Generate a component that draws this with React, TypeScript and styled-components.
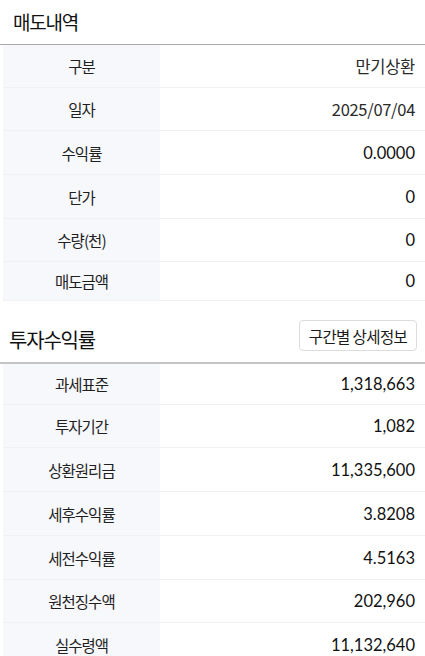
import React from "react";
import styled, { createGlobalStyle } from "styled-components";

const Global = createGlobalStyle`
  html, body { margin: 0; padding: 0; background: #ffffff; }
  body { font-family: Lato, "Noto Sans CJK KR", sans-serif; color: #222; }
  * { box-sizing: border-box; }
`;

const Page = styled.div`
  width: 425px;
  display: flex;
  flex-direction: column;
`;

const SectionHeader = styled.div<{ $height: number; $line: number; $lineColor: string }>`
  height: ${(p) => p.$height}px;
  display: flex;
  align-items: flex-end;
  justify-content: space-between;
  border-bottom: ${(p) => p.$line}px solid ${(p) => p.$lineColor};
  padding-right: 8px;
`;

const Title = styled.h2<{ $left: number; $size: number; $bottom: number }>`
  margin: 0;
  padding-left: ${(p) => p.$left}px;
  padding-bottom: ${(p) => p.$bottom}px;
  font-family: "Noto Sans CJK KR", sans-serif;
  font-size: ${(p) => p.$size}px;
  font-weight: 400;
  letter-spacing: -1.2px;
  line-height: 26px;
  color: #111;
`;

const DetailButton = styled.button`
  margin-bottom: 11px;
  height: 31px;
  width: 118px;
  padding: 0;
  background: #fff;
  border: 1px solid #dcdcdc;
  border-radius: 4px;
  font-family: "Noto Sans CJK KR", sans-serif;
  font-size: 15.5px;
  letter-spacing: -0.6px;
  color: #1a1a1a;
`;

const Table = styled.div`
  margin-left: 3px;
  display: flex;
  flex-direction: column;
`;

const Row = styled.div<{ $h: number }>`
  height: ${(p) => p.$h}px;
  display: grid;
  grid-template-columns: 157px 1fr;
  border-bottom: 1px solid #f1f1f3;
`;

const Label = styled.div`
  background: #f7f8fc;
  display: flex;
  align-items: center;
  justify-content: center;
  font-family: "Noto Sans CJK KR", sans-serif;
  font-size: 15.5px;
  letter-spacing: -1px;
  color: #1f1f1f;
`;

const Value = styled.div<{ $plain?: boolean }>`
  display: flex;
  align-items: center;
  justify-content: flex-end;
  padding-right: 10px;
  font-family: ${(p) => (p.$plain ? `"Noto Sans CJK KR", sans-serif` : `Lato, "Noto Sans CJK KR", sans-serif`)};
  font-size: 16.5px;
  letter-spacing: ${(p) => (p.$plain ? "-0.3px" : "0")};
  font-weight: 400;
  color: ${(p) => (p.$plain ? "#2a2a2a" : "#111")};
`;

type Item = { label: string; value: string; plain?: boolean; h?: number };

const sale: Item[] = [
  { label: "구분", value: "만기상환", plain: true, h: 43 },
  { label: "일자", value: "2025/07/04", plain: true, h: 43 },
  { label: "수익률", value: "0.0000", h: 44 },
  { label: "단가", value: "0", h: 44 },
  { label: "수량(천)", value: "0", h: 43 },
  { label: "매도금액", value: "0", h: 39 },
];

const yieldRows: Item[] = [
  { label: "과세표준", value: "1,318,663", h: 41 },
  { label: "투자기간", value: "1,082", h: 43 },
  { label: "상환원리금", value: "11,335,600", h: 44 },
  { label: "세후수익률", value: "3.8208", h: 44 },
  { label: "세전수익률", value: "4.5163", h: 44 },
  { label: "원천징수액", value: "202,960", h: 43 },
  { label: "실수령액", value: "11,132,640", h: 44 },
];

const DataTable = ({ items }: { items: Item[] }) => (
  <Table>
    {items.map((it) => (
      <Row key={it.label} $h={it.h ?? 44}>
        <Label>{it.label}</Label>
        <Value $plain={it.plain}>{it.value}</Value>
      </Row>
    ))}
  </Table>
);

export default function App() {
  return (
    <>
      <Global />
      <Page>
        <SectionHeader $height={45} $line={1} $lineColor="#a8a8a8">
          <Title $left={13} $size={19} $bottom={9}>매도내역</Title>
        </SectionHeader>
        <DataTable items={sale} />
        <SectionHeader $height={63} $line={2} $lineColor="#c4c4c4">
          <Title $left={9} $size={20} $bottom={9}>투자수익률</Title>
          <DetailButton>구간별 상세정보</DetailButton>
        </SectionHeader>
        <DataTable items={yieldRows} />
      </Page>
    </>
  );
}
